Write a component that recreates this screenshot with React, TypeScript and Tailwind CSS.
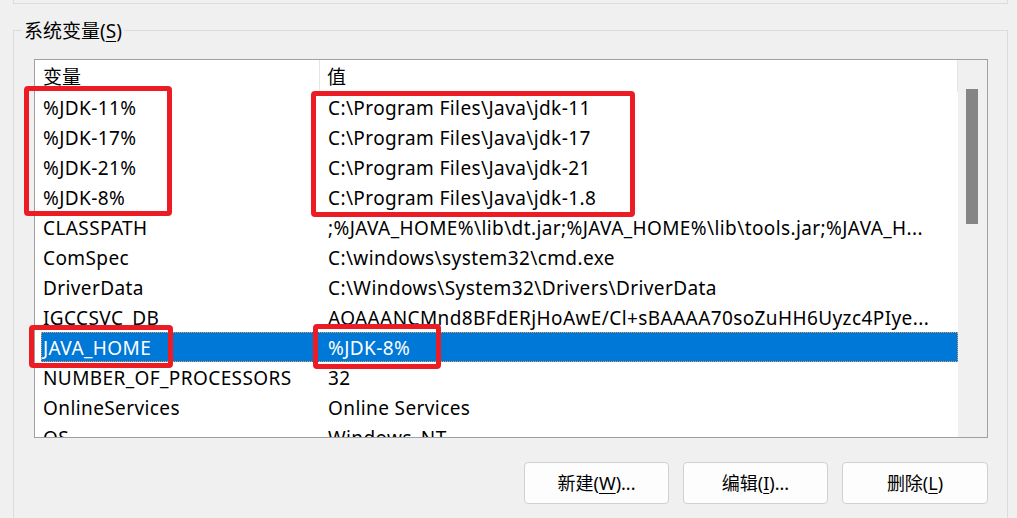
import React from "react";

type Row = { name: string; value: string; selected?: boolean };

const rows: Row[] = [
  { name: "%JDK-11%", value: "C:\\Program Files\\Java\\jdk-11" },
  { name: "%JDK-17%", value: "C:\\Program Files\\Java\\jdk-17" },
  { name: "%JDK-21%", value: "C:\\Program Files\\Java\\jdk-21" },
  { name: "%JDK-8%", value: "C:\\Program Files\\Java\\jdk-1.8" },
  { name: "CLASSPATH", value: ";%JAVA_HOME%\\lib\\dt.jar;%JAVA_HOME%\\lib\\tools.jar;%JAVA_H..." },
  { name: "ComSpec", value: "C:\\windows\\system32\\cmd.exe" },
  { name: "DriverData", value: "C:\\Windows\\System32\\Drivers\\DriverData" },
  { name: "IGCCSVC_DB", value: "AQAAANCMnd8BFdERjHoAwE/Cl+sBAAAA70soZuHH6Uyzc4PIye..." },
  { name: "JAVA_HOME", value: "%JDK-8%", selected: true },
  { name: "NUMBER_OF_PROCESSORS", value: "32" },
  { name: "OnlineServices", value: "Online Services" },
  { name: "OS", value: "Windows_NT" },
];

const FONT = "font-['Noto_Sans','Noto_Sans_CJK_SC',sans-serif]";

export default function App() {
  return (
    <div className={`relative w-[1017px] h-[518px] overflow-hidden bg-[#f0f0f0] text-[19px] text-black ${FONT}`}>
      {/* Bottom of the previous group box */}
      <div className="ml-[13px] mr-[9px] h-[4px] border-x border-b border-[#dcdcdc]" />

      {/* 系统变量 group box */}
      <div className="ml-[13px] mr-[9px] mt-[26px] h-[600px] border border-[#dcdcdc] flex flex-col">
        <div className="-mt-[13px] ml-[8px] w-fit px-[2px] bg-[#f0f0f0] leading-[26px]">
          系统变量(<span className="underline underline-offset-[3px]">S</span>)
        </div>

        {/* List view */}
        <div className="mt-[15px] ml-[20px] w-[954px] h-[379px] border border-[#a0a0a0] bg-white flex">
          <div className="w-[923px] flex flex-col overflow-hidden">
            {/* Header */}
            <div className="h-[32px] shrink-0 flex leading-[26px]">
              <div className="w-[285px] pl-[8px] pt-[4px] border-r border-[#e5e5e5]">变量</div>
              <div className="flex-1 pl-[7px] pt-[4px] border-r border-[#e5e5e5]">值</div>
            </div>

            {/* Rows */}
            {rows.map((r) => (
              <div key={r.name} className="h-[30px] shrink-0 flex pl-[6px] tracking-[0.4px]">
                <div
                  className={
                    r.selected
                      ? "flex-1 flex items-center pt-[2px] bg-[#0078d7] text-white outline-1 outline-dotted -outline-offset-1 outline-[#e0a060]"
                      : "flex-1 flex items-center pt-[2px]"
                  }
                >
                  <div className="w-[279px] pl-[2px] whitespace-nowrap">{r.name}</div>
                  <div className="flex-1 pl-[8px] whitespace-nowrap overflow-hidden">{r.value}</div>
                </div>
              </div>
            ))}
          </div>

          {/* Scrollbar */}
          <div className="w-[29px] bg-[#f0f0f0] pt-[29px] pl-[8px]">
            <div className="w-[12px] h-[135px] bg-[#858585]" />
          </div>
        </div>

        {/* Buttons */}
        <div className="mt-[24px] mr-[19px] flex justify-end gap-[14px] text-[18px]">
          <button className="w-[145px] h-[42px] rounded-[4px] border border-[#d0d0d0] bg-[#fdfdfd]">
            新建(<span className="underline underline-offset-[3px]">W</span>)...
          </button>
          <button className="w-[145px] h-[42px] rounded-[4px] border border-[#d0d0d0] bg-[#fdfdfd]">
            编辑(<span className="underline underline-offset-[3px]">I</span>)...
          </button>
          <button className="w-[146px] h-[42px] rounded-[4px] border border-[#d0d0d0] bg-[#fdfdfd]">
            删除(<span className="underline underline-offset-[3px]">L</span>)
          </button>
        </div>
      </div>

      {/* Red annotation boxes */}
      <div className="absolute left-[24px] top-[86px] w-[148px] h-[130px] border-[5px] border-[#ec1c24] rounded-[4px]" />
      <div className="absolute left-[311px] top-[91px] w-[324px] h-[126px] border-[5px] border-[#ec1c24] rounded-[4px]" />
      <div className="absolute left-[29px] top-[325px] w-[144px] h-[43px] border-[5px] border-[#ec1c24] rounded-[4px]" />
      <div className="absolute left-[313px] top-[324px] w-[128px] h-[45px] border-[5px] border-[#ec1c24] rounded-[4px]" />
    </div>
  );
}
